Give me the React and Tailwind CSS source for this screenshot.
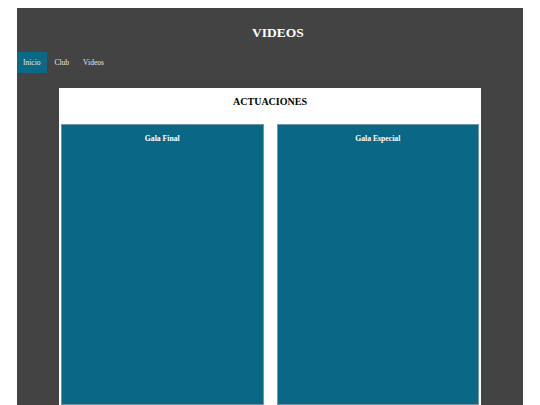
import React from "react";

const links = ["Inicio", "Club", "Videos"];
const videos = ["Gala Final", "Gala Especial"];

export default function App() {
  return (
    <div className="min-h-[405px] bg-white pt-2 pl-[17px] pr-[17px] font-['Liberation_Serif',serif]">
      <div className="bg-[#434343] min-h-[397px]">
        <h1 className="h-[44px] pt-[16px] pl-[16px] text-center text-[13.5px] font-bold leading-[18px] text-white">
          VIDEOS
        </h1>

        <nav className="flex h-[21px] gap-[2px]">
          {links.map((l, i) => (
            <a
              key={l}
              className={`flex items-center px-[6px] text-[7.5px] text-gray-200 ${
                i === 0 ? "bg-[#0b6986]" : ""
              }`}
            >
              {l}
            </a>
          ))}
        </nav>

        <section className="mx-[42px] mt-[15px] bg-white px-[1px]">
          <h2 className="h-[36px] pt-[7px] text-center text-[10px] font-bold leading-[14px] text-black">
            ACTUACIONES
          </h2>
          <div className="grid grid-cols-2 gap-[13px] px-[1px]">
            {videos.map((v) => (
              <div
                key={v}
                className="h-[281px] border border-[#6f98a6] bg-[#0a6886] pt-[8px] text-center text-[7.7px] font-bold text-white"
              >
                {v}
              </div>
            ))}
          </div>
        </section>
      </div>
    </div>
  );
}
